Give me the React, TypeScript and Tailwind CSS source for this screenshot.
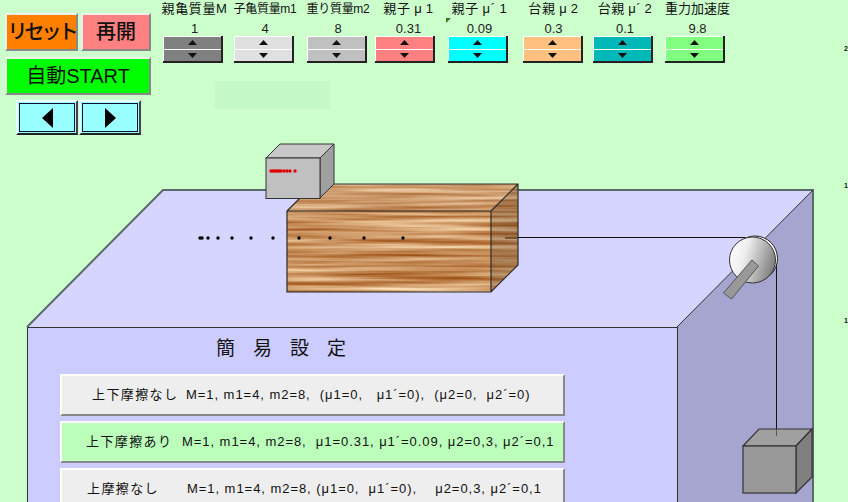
import React from "react";

const font = "font-['Liberation_Sans','Noto_Sans_CJK_JP',sans-serif]";

const spinners = [
  { label: "親亀質量M", value: "1", bg: "bg-[#808080]", wrap: "ml-0", text: "ml-[3px]", size: "text-[13px] tracking-[0.6px]" },
  { label: "子亀質量m1", value: "4", bg: "bg-[#e0e0e0]", wrap: "ml-[11px]", text: "ml-[2px]", size: "text-[12px] tracking-[-0.3px]" },
  { label: "重り質量m2", value: "8", bg: "bg-[#c0c0c0]", wrap: "ml-[13px]", text: "ml-[2px]", size: "text-[12px] tracking-[-0.3px]" },
  { label: "親子\u2009μ\u20091", value: "0.31", bg: "bg-[#ff8080]", wrap: "ml-[8px]", text: "ml-[7px]", size: "text-[13px] tracking-[0.8px]" },
  { label: "親子\u2009μ´\u20091", value: "0.09", bg: "bg-[#00ffff]", wrap: "ml-[13px]", text: "ml-[3px]", size: "text-[13px] tracking-[0.8px]" },
  { label: "台親\u2009μ\u20091".replace("1", "2"), value: "0.3", bg: "bg-[#ffc080]", wrap: "ml-[15px]", text: "ml-[1px]", size: "text-[13px] tracking-[0.8px]" },
  { label: "台親\u2009μ´\u20092", value: "0.1", bg: "bg-[#00b8b8]", wrap: "ml-[10px]", text: "ml-[4px]", size: "text-[13px] tracking-[0.6px]" },
  { label: "重力加速度", value: "9.8", bg: "bg-[#80ff80]", wrap: "ml-[12px]", text: "ml-[5px]", size: "text-[13px]" },
];

const presets = [
  {
    name: "上下摩擦なし",
    text: "M=1, m1=4, m2=8,  (μ1=0,   μ1´=0),  (μ2=0,  μ2´=0)",
    bg: "bg-[#eeeeee]",
    pad: "pl-[30px]",
    nameW: "w-[94px]",
  },
  {
    name: "上下摩擦あり",
    text: "M=1, m1=4, m2=8,  μ1=0.31, μ1´=0.09, μ2=0,3, μ2´=0,1",
    bg: "bg-[#bbffbb]",
    pad: "pl-[24px]",
    nameW: "w-[96px]",
  },
  {
    name: "上摩擦なし",
    text: "M=1, m1=4, m2=8, (μ1=0,  μ1´=0),    μ2=0,3, μ2´=0,1",
    bg: "bg-[#eeeeee]",
    pad: "pl-[25px]",
    nameW: "w-[100px]",
  },
];

const blackDots = [200, 202, 208, 218, 232, 251, 273, 299, 330, 364, 403];
const redDots = [271, 273, 275, 277, 279, 281, 284, 287, 290, 295];

const Spinner = ({ bg }: { bg: string }) => (
  <div className="flex flex-col w-[60px] h-[27px] border-r-2 border-b-2 border-r-[#222] border-b-[#222]">
    {[0, 1].map((i) => (
      <div
        key={i}
        className={`flex-1 flex items-center justify-center border-t border-l border-t-white border-l-white ${bg}`}
      >
        <svg width="9" height="5" viewBox="0 0 9 5">
          <polygon points={i === 0 ? "4.5,0 9,5 0,5" : "0,0 9,0 4.5,5"} fill="#111" />
        </svg>
      </div>
    ))}
  </div>
);

const ArrowButton = ({ dir }: { dir: "left" | "right" }) => (
  <button className="w-[62px] h-[35px] bg-[#99ffff] border-t-2 border-l-2 border-t-[#e8ffff] border-l-[#e8ffff] border-r-2 border-b-2 border-r-[#444] border-b-[#222] p-[1px]">
    <div className="w-full h-full border border-[#113] flex items-center justify-center">
      <svg width="11" height="20" viewBox="0 0 11 20">
        <polygon points={dir === "left" ? "11,0 11,20 0,10" : "0,0 0,20 11,10"} fill="#000" />
      </svg>
    </div>
  </button>
);

const Scene = () => (
  <svg className="absolute inset-0" width="848" height="502" viewBox="0 0 848 502">
    <defs>
      <filter id="wood" x="0" y="0" width="100%" height="100%" colorInterpolationFilters="sRGB">
        <feTurbulence type="fractalNoise" baseFrequency="0.006 0.22" numOctaves="3" seed="7" />
        <feColorMatrix values="0.5 0 0 0 0.54  0.75 0 0 0 0.2  0.85 0 0 0 -0.05  0 0 0 0 1" />
      </filter>
      <clipPath id="woodFront">
        <rect x="287" y="211" width="204" height="81" />
      </clipPath>
      <clipPath id="woodTop">
        <polygon points="287,211 314,184 518,184 491,211" />
      </clipPath>
      <clipPath id="woodSide">
        <polygon points="491,211 518,184 518,265 491,292" />
      </clipPath>
      <linearGradient id="pulley" x1="0" y1="0.2" x2="1" y2="0.5">
        <stop offset="0" stopColor="#ffffff" />
        <stop offset="0.35" stopColor="#eeeeee" />
        <stop offset="1" stopColor="#808080" />
      </linearGradient>
    </defs>

    {/* table */}
    <polygon points="27,327 163,190 813,190 677,327" fill="#d5d5ff" />
    <polygon points="677,327 813,190 813,502 677,502" fill="#a5a5cf" />
    <path d="M27 327 L163 190 H813 V502" fill="none" stroke="#5a6a6a" strokeWidth="2" />
    <path d="M677 327 L813 190" stroke="#333" strokeWidth="1" />

    {/* wood block */}
    <g clipPath="url(#woodFront)">
      <rect x="287" y="211" width="204" height="81" filter="url(#wood)" />
    </g>
    <g clipPath="url(#woodTop)">
      <rect x="287" y="184" width="231" height="27" filter="url(#wood)" />
      <rect x="287" y="184" width="231" height="27" fill="#fff" opacity="0.1" />
    </g>
    <g clipPath="url(#woodSide)">
      <rect x="491" y="184" width="27" height="108" filter="url(#wood)" />
      <rect x="491" y="184" width="27" height="108" fill="#000" opacity="0.16" />
    </g>
    <path
      d="M287 211 L314 184 H518 V265 L491 292 H287 Z M287 211 H491 V292 M491 211 L518 184"
      fill="none"
      stroke="#2a2a2a"
      strokeWidth="1.2"
    />

    {/* small block */}
    <polygon points="266,158 280,144 334,144 320,158" fill="#c8c8c8" stroke="#333" />
    <polygon points="320,158 334,144 334,184 320,198" fill="#a0a0a0" stroke="#333" />
    <rect x="266" y="158" width="54" height="40.5" fill="#c0c0c0" stroke="#333" />
    {redDots.map((x) => (
      <circle key={x} cx={x} cy="171" r="1.7" fill="#e00000" />
    ))}

    {blackDots.map((x) => (
      <circle key={x} cx={x} cy="238" r="1.7" fill="#000" />
    ))}

    {/* strings */}
    <line x1="518" y1="237.5" x2="745" y2="237.5" stroke="#111" strokeWidth="1" />
    <line x1="505" y1="238" x2="518" y2="238" stroke="#4a3010" strokeWidth="1.2" />
    <line x1="776.5" y1="262" x2="776.5" y2="436" stroke="#111" strokeWidth="1" />

    {/* pulley */}
    <circle cx="755" cy="258.5" r="22.5" fill="#fff" stroke="#222" strokeWidth="1" />
    <circle cx="752.5" cy="260" r="23" fill="url(#pulley)" stroke="#333" strokeWidth="1" />
    <polygon points="752,260 758.5,266 731.5,299 723.5,293" fill="#999" stroke="#555" strokeWidth="1" />

    {/* weight */}
    <polygon points="743,446 759,429 812,429 796,446" fill="#a0a0a0" stroke="#333" strokeWidth="1.2" />
    <polygon points="796,446 812,429 812,477 796,493" fill="#808080" stroke="#333" strokeWidth="1.2" />
    <rect x="743" y="446" width="53" height="47" fill="#999" stroke="#333" strokeWidth="1.2" />
    <line x1="776.5" y1="429" x2="776.5" y2="436" stroke="#555" strokeWidth="1" />
  </svg>
);

export default function App() {
  return (
    <div className={`relative w-[848px] h-[502px] overflow-hidden bg-[#ccffcc] text-[#111] ${font}`}>
      <Scene />

      {/* faint leftover box, mark and clipped axis numbers */}
      <div className="absolute left-[215px] top-[81px] w-[115px] h-[28px] bg-[#c4f8c6]" />
      <div className="absolute left-[446px] top-[18px] w-0 h-0 border-t-[5px] border-r-[5px] border-t-[#2e7d22] border-r-transparent" />
      <span className="absolute left-[844px] top-[44px] text-[7px] font-bold">2</span>
      <span className="absolute left-[844px] top-[181px] text-[7px] font-bold">1</span>
      <span className="absolute left-[844px] top-[316px] text-[7px] font-bold">1</span>

      {/* top controls */}
      <div className="relative flex items-start">
        <div className="w-[163px] pl-[5px] pt-[13px] shrink-0">
          <div className="flex gap-[3px]">
            <button className="w-[73px] h-[38px] bg-[#ff8000] border-t-2 border-l-2 border-t-[#f0f0f0] border-l-[#f0f0f0] border-r-2 border-b-2 border-r-[#888] border-b-[#888] text-[20px] font-medium leading-none tracking-[-3px] whitespace-nowrap">
              リセット
            </button>
            <button className="w-[70px] h-[38px] bg-[#ff8080] border-t-2 border-l-2 border-t-[#f0f0f0] border-l-[#f0f0f0] border-r-2 border-b-2 border-r-[#888] border-b-[#888] text-[20px] font-medium leading-none">
              再開
            </button>
          </div>
          <button className="w-[146px] h-[38px] mt-[6px] bg-[#00ff00] border-t-2 border-l-2 border-t-[#f0f0f0] border-l-[#f0f0f0] border-r-2 border-b-2 border-r-[#888] border-b-[#888] text-[20px] leading-none">
            自動START
          </button>
          <div className="flex gap-[1px] mt-[5px] ml-[11px]">
            <ArrowButton dir="left" />
            <ArrowButton dir="right" />
          </div>
        </div>

        <div className="flex items-start">
          {spinners.map((s) => (
            <div key={s.value + s.label} className={`w-[60px] flex flex-col items-center ${s.wrap}`}>
              <div className={`flex flex-col items-center h-[36px] ${s.text}`}>
                <span className={`leading-[18px] whitespace-nowrap ${s.size}`}>{s.label}</span>
                <span className="text-[13px] leading-[18px] mt-[2px] text-[#222]">{s.value}</span>
              </div>
              <Spinner bg={s.bg} />
            </div>
          ))}
        </div>
      </div>

      {/* presets panel sits over the table */}
      <div className="absolute left-[27px] top-[327px] w-[651px] h-[175px] bg-[#ccccff] border-l border-t border-r border-[#333]">
        <div className="pl-[188px] pt-[9px] text-[19px] leading-[24px] tracking-[18px] whitespace-nowrap">
          簡易設定
        </div>
        <div className="flex flex-col gap-[5px] mt-[13px] ml-[32px] w-[505px]">
          {presets.map((p) => (
            <button
              key={p.name}
              className={`flex items-center h-[42px] shrink-0 whitespace-pre text-[13px] border-t-2 border-l-2 border-t-white border-l-white border-r-2 border-b-2 border-r-[#888] border-b-[#888] ${p.bg} ${p.pad}`}
            >
              <span className={`text-left tracking-[1.4px] ${p.nameW}`}>{p.name}</span>
              <span className="text-[13px] tracking-[0.95px]">{p.text}</span>
            </button>
          ))}
        </div>
      </div>
    </div>
  );
}
